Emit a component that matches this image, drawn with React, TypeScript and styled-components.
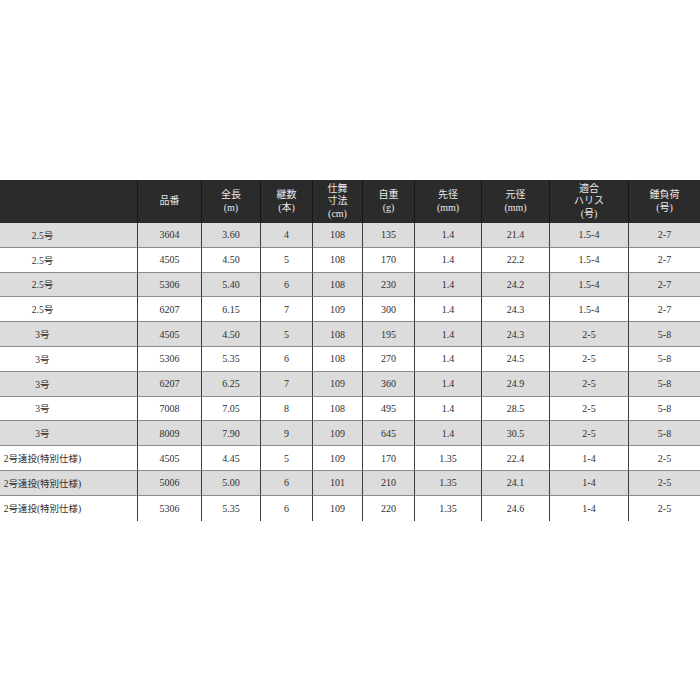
import styled, { createGlobalStyle } from "styled-components"

const GlobalStyle = createGlobalStyle`
  html, body {
    margin: 0;
    padding: 0;
    background: #ffffff;
  }
  body {
    font-family: "Liberation Serif", "Noto Sans CJK JP", serif;
  }
`

const Page = styled.div`
  width: 700px;
  height: 700px;
  padding-top: 180px;
  box-sizing: border-box;
`

const Table = styled.div`
  display: grid;
  grid-template-columns: 138px 64px 59px 52px 50px 52px 67px 68px 79px 71px;
  width: 700px;
`

const HeaderCell = styled.div`
  height: 43px;
  background: #2b2b2b;
  color: #e8e8e8;
  font-size: 10px;
  line-height: 12.5px;
  display: flex;
  align-items: center;
  justify-content: center;
  text-align: center;
  border-right: ${(p: { last?: boolean }) => (p.last ? "none" : "1px solid #161616")};
  box-sizing: border-box;
`

const Cell = styled.div<{ shade: boolean; first?: boolean; last?: boolean; bottom?: boolean }>`
  height: 24.8px;
  box-sizing: border-box;
  background: ${(p) => (p.shade ? "#dcdcdc" : "#ffffff")};
  color: #2e2e2e;
  font-size: ${(p) => (p.first ? "9.5px" : "10px")};
  display: flex;
  align-items: center;
  justify-content: center;
  padding-right: ${(p) => (p.first ? "52px" : "0")};
  white-space: nowrap;
  border-right: ${(p) => (p.last ? "none" : "1px solid #3c3c3c")};
  border-bottom: ${(p) => (p.bottom ? "none" : "1px solid #8c8c8c")};
`

const headers: string[][] = [
  [""],
  ["品番"],
  ["全長", "(m)"],
  ["継数", "(本)"],
  ["仕舞", "寸法", "(cm)"],
  ["自重", "(g)"],
  ["先径", "(mm)"],
  ["元径", "(mm)"],
  ["適合", "ハリス", "(号)"],
  ["錘負荷", "(号)"],
]

const rows: string[][] = [
  ["2.5号", "3604", "3.60", "4", "108", "135", "1.4", "21.4", "1.5-4", "2-7"],
  ["2.5号", "4505", "4.50", "5", "108", "170", "1.4", "22.2", "1.5-4", "2-7"],
  ["2.5号", "5306", "5.40", "6", "108", "230", "1.4", "24.2", "1.5-4", "2-7"],
  ["2.5号", "6207", "6.15", "7", "109", "300", "1.4", "24.3", "1.5-4", "2-7"],
  ["3号", "4505", "4.50", "5", "108", "195", "1.4", "24.3", "2-5", "5-8"],
  ["3号", "5306", "5.35", "6", "108", "270", "1.4", "24.5", "2-5", "5-8"],
  ["3号", "6207", "6.25", "7", "109", "360", "1.4", "24.9", "2-5", "5-8"],
  ["3号", "7008", "7.05", "8", "108", "495", "1.4", "28.5", "2-5", "5-8"],
  ["3号", "8009", "7.90", "9", "109", "645", "1.4", "30.5", "2-5", "5-8"],
  ["2号遠投(特別仕様)", "4505", "4.45", "5", "109", "170", "1.35", "22.4", "1-4", "2-5"],
  ["2号遠投(特別仕様)", "5006", "5.00", "6", "101", "210", "1.35", "24.1", "1-4", "2-5"],
  ["2号遠投(特別仕様)", "5306", "5.35", "6", "109", "220", "1.35", "24.6", "1-4", "2-5"],
]

export default function App() {
  return (
    <Page>
      <GlobalStyle />
      <Table>
        {headers.map((lines, i) => (
          <HeaderCell key={`h${i}`} last={i === headers.length - 1}>
            <div>
              {lines.map((l, j) => (
                <div key={j}>{l}</div>
              ))}
            </div>
          </HeaderCell>
        ))}
        {rows.map((row, r) =>
          row.map((v, c) => (
            <Cell
              key={`${r}-${c}`}
              shade={r % 2 === 0}
              first={c === 0}
              last={c === row.length - 1}
              bottom={r === rows.length - 1}
            >
              {v}
            </Cell>
          ))
        )}
      </Table>
    </Page>
  )
}
